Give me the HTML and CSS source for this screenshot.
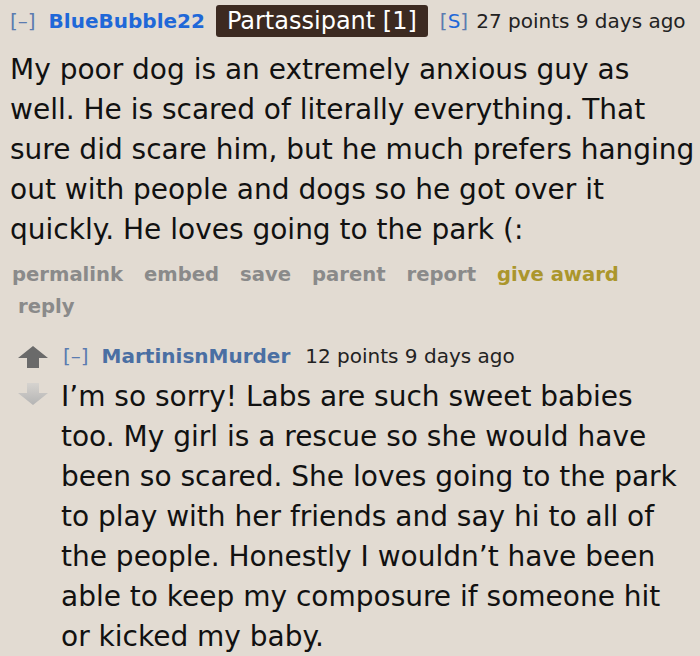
FILE: index.html
```html
<!DOCTYPE html>
<html>
<head>
<meta charset="utf-8">
<link rel="stylesheet" href="styles.css">
</head>
<body>
<div class="comment">
  <div class="tagline">
    <span class="toggle">[–]</span>
    <span class="author">BlueBubble22</span>
    <span class="flair">Partassipant [1]</span>
    <span class="sub">[<span class="s">S</span>]</span>
    <span class="score">27 points 9 days ago</span>
  </div>
  <div class="body">My poor dog is an extremely anxious guy as well. He is scared of literally everything. That sure did scare him, but he much prefers hanging out with people and dogs so he got over it quickly. He loves going to the park (:</div>
  <ul class="buttons">
    <li>permalink</li>
    <li>embed</li>
    <li>save</li>
    <li>parent</li>
    <li>report</li>
    <li class="award">give award</li>
    <li class="reply">reply</li>
  </ul>
  <div class="child">
    <div class="votes">
      <svg class="arrow" width="30" height="22" viewBox="0 0 30 22"><path d="M15 0 L30 12 L21 12 L21 22 L9 22 L9 12 L0 12 Z" fill="#6a6a6a"/></svg>
      <svg class="arrow down" width="30" height="22" viewBox="0 0 30 22"><defs><linearGradient id="g" x1="0" y1="0" x2="0" y2="1"><stop offset="0" stop-color="#d6d3cf"/><stop offset="1" stop-color="#b4b4b4"/></linearGradient></defs><path d="M9 0 L21 0 L21 10 L30 10 L15 22 L0 10 L9 10 Z" fill="url(#g)"/></svg>
    </div>
    <div class="entry">
      <div class="tagline small">
        <span class="toggle">[–]</span>
        <span class="author muted">MartinisnMurder</span>
        <span class="score">12 points 9 days ago</span>
      </div>
      <div class="body child-body">I’m so sorry! Labs are such sweet babies too. My girl is a rescue so she would have been so scared. She loves going to the park to play with her friends and say hi to all of the people. Honestly I wouldn’t have been able to keep my composure if someone hit or kicked my baby.</div>
    </div>
  </div>
</div>
</body>
</html>
```

FILE: styles.css
```css
html, body {
  margin: 0;
  padding: 0;
  background: #e2dbd2;
}
body {
  font-family: "DejaVu Sans", Verdana, sans-serif;
  color: #111;
  width: 700px;
  height: 656px;
  overflow: hidden;
}
.comment {
  padding: 5px 0 0 10px;
}
.tagline {
  display: flex;
  align-items: center;
  font-size: 20px;
  height: 32px;
  white-space: nowrap;
}
.toggle {
  color: #5b7bb0;
  margin-right: 13px;
}
.author {
  color: #1f68d8;
  font-weight: bold;
  margin-right: 11px;
}
.flair {
  background: #3c2a21;
  color: #fff;
  font-size: 24px;
  border-radius: 3px;
  padding: 0 11px;
  height: 32px;
  line-height: 32px;
  margin-right: 12px;
}
.sub {
  color: #5b7bb0;
  margin-right: 8px;
}
.sub .s {
  color: #1f68d8;
}
.score {
  color: #222;
}
.body {
  font-size: 28px;
  line-height: 40px;
  margin-top: 13px;
  width: 692px;
}
.buttons {
  list-style: none;
  margin: 9px 0 0 2px;
  padding: 0;
  display: flex;
  flex-wrap: wrap;
  column-gap: 21px;
  font-size: 19.6px;
  font-weight: bold;
  color: #8a8a8a;
  line-height: 32px;
  width: 640px;
}
.buttons .award {
  color: #ab962c;
}
.buttons .reply {
  margin-left: 6px;
}
.child {
  display: flex;
  margin-top: 17px;
  margin-left: 8px;
}
.votes {
  display: flex;
  flex-direction: column;
  gap: 15px;
  padding-top: 6px;
  width: 30px;
  margin-right: 13px;
}
.entry {
  flex: 1;
}
.tagline.small {
  padding-left: 2px;
}
.tagline.small .toggle {
  margin-right: 13px;
}
.author.muted {
  color: #4a6fa3;
  margin-right: 15px;
}
.child-body {
  margin-top: 5px;
  width: 630px;
}
```
